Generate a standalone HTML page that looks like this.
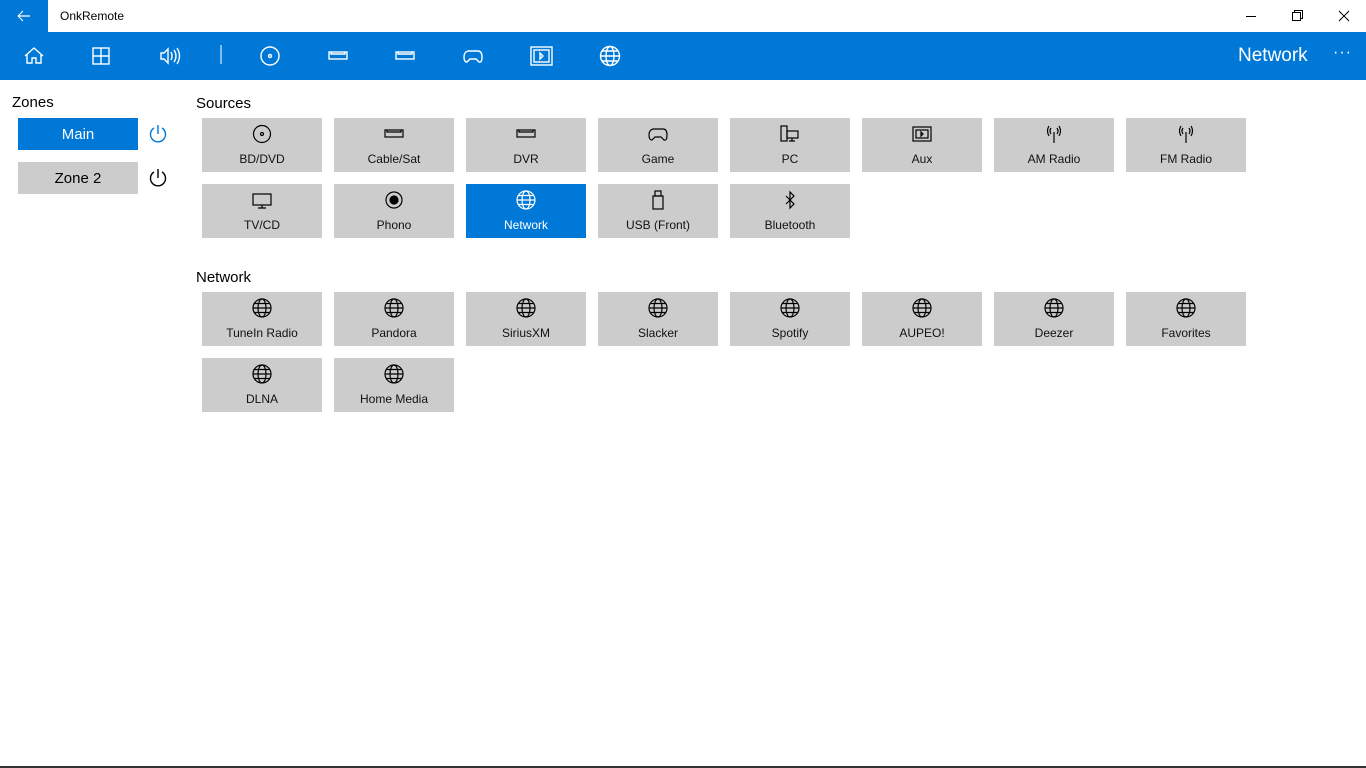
<!DOCTYPE html><html><head><meta charset="utf-8"><style>
*{margin:0;padding:0;box-sizing:border-box}
body{width:1366px;height:768px;background:#fff;font-family:"Liberation Sans",sans-serif;position:relative;overflow:hidden;color:#000}
.abs{position:absolute}
.tb{left:0;top:0;width:1366px;height:32px;background:#fff}
.back{left:0;top:0;width:48px;height:32px;background:#0078d7}
.bar{left:0;top:32px;width:1366px;height:48px;background:#0078d7}
.tile{position:absolute;width:120px;height:54px;background:#cccccc;text-align:center;font-size:12px;color:#111}
.tile svg{position:absolute;left:50%;top:6px;margin-left:-10px}
.tile span{position:absolute;left:0;right:0;top:34px}
.tile.sel{background:#0078d7;color:#fff}
.h{font-size:15px;color:#000}
.zb{position:absolute;left:18px;width:120px;height:32px;font-size:15px;text-align:center;line-height:34px}
</style></head><body>
<div class="abs tb"></div>
<div class="abs back"><svg width="48" height="32"><path d="M18 16h12M18 16l5-5M18 16l5 5" stroke="#fff" stroke-width="1.2" fill="none"/></svg></div>
<div class="abs" style="left:60px;top:9px;font-size:12px">OnkRemote</div>
<svg class="abs" style="left:1230px;top:0" width="136" height="32" fill="none" stroke="#000" stroke-width="1">
<path d="M16 16.5h10"/><rect x="62.5" y="12.5" width="8" height="8"/><path d="M64.5 12.5v-2h8v8h-2"/><path d="M109 11l10 10M119 11l-10 10"/></svg>
<div class="abs bar"></div>
<svg class="abs" style="left:0;top:32px" width="640" height="48" fill="none" stroke="#fff" stroke-width="1.4">
<path d="M25 24l9-8 9 8M27 22v9h5v-5h4v5h5v-9"/>
<rect x="93" y="16" width="16" height="16"/><path d="M101 16v16M93 24h16"/>
<path d="M161 21h3l4-4v14l-4-4h-3z M171 20q2 4 0 8 M174 18q4 6 0 12 M177 16q5 8 0 16"/>
<path d="M221 13v19" stroke-width="1"/>
<circle cx="270" cy="24" r="9"/><circle cx="270" cy="24" r="1.5"/>
<rect x="329" y="20" width="18" height="7"/><path d="M331 20v2h14v-2"/>
<rect x="396" y="20" width="18" height="7"/><path d="M398 20v2h14v-2"/>
<path d="M468 19h10q4 0 4 6t-3 5l-3-3h-6l-3 3q-3 0-3-5t4-6z"/>
<rect x="531" y="15" width="21" height="18"/><rect x="534" y="18" width="15" height="12"/><path d="M540 21l3 3-3 3z"/>
<circle cx="610" cy="24" r="9.5"/><ellipse cx="610" cy="24" rx="4" ry="9.5"/><path d="M600.5 24h19M602 19h16M602 29h16"/>
</svg>
<div class="abs" style="left:1238px;top:45px;font-size:19px;color:#fff">Network</div>
<div class="abs" style="left:1333px;top:44px;font-size:16px;color:#fff;letter-spacing:1px">···</div>

<div class="abs h" style="left:12px;top:94px">Zones</div>
<div class="zb" style="top:118px;background:#0078d7;color:#fff">Main</div>
<div class="zb" style="top:162px;background:#ccc">Zone 2</div>
<svg class="abs" style="left:147px;top:123px" width="22" height="66" fill="none" stroke-width="1.4">
<g stroke="#0078d7"><path d="M11 2v9"/><path d="M7 5a7.5 7.5 0 1 0 8 0"/></g>
<g stroke="#000" transform="translate(0,44)"><path d="M11 2v9"/><path d="M7 5a7.5 7.5 0 1 0 8 0"/></g></svg>

<div class="abs h" style="left:196px;top:95px">Sources</div>
<div class="abs h" style="left:196px;top:269px">Network</div>

<div class="tile" style="left:202px;top:118px"><svg width="20" height="20" fill="none" stroke="#000" stroke-width="1.2"><circle cx="10" cy="10" r="8.5"/><circle cx="10" cy="10" r="1.5"/></svg><span>BD/DVD</span></div>
<div class="tile" style="left:334px;top:118px"><svg width="20" height="20" fill="none" stroke="#000" stroke-width="1.2"><rect x="1" y="6" width="18" height="7"/><path d="M3 6v2h14v-2"/></svg><span>Cable/Sat</span></div>
<div class="tile" style="left:466px;top:118px"><svg width="20" height="20" fill="none" stroke="#000" stroke-width="1.2"><rect x="1" y="6" width="18" height="7"/><path d="M3 6v2h14v-2"/></svg><span>DVR</span></div>
<div class="tile" style="left:598px;top:118px"><svg width="20" height="20" fill="none" stroke="#000" stroke-width="1.2"><path d="M5 5h10q4 0 4 6t-3 5l-3-3h-6l-3 3q-3 0-3-5t4-6z"/></svg><span>Game</span></div>
<div class="tile" style="left:730px;top:118px"><svg width="20" height="20" fill="none" stroke="#000" stroke-width="1.2"><rect x="1" y="2" width="6" height="15"/><rect x="7" y="7" width="11" height="7"/><path d="M12 14v3M9 17h6"/></svg><span>PC</span></div>
<div class="tile" style="left:862px;top:118px"><svg width="20" height="20" fill="none" stroke="#000" stroke-width="1.2"><rect x="1" y="3" width="18" height="14"/><rect x="4" y="6" width="12" height="8"/><path d="M9 8l2 2-2 2z"/></svg><span>Aux</span></div>
<div class="tile" style="left:994px;top:118px"><svg width="20" height="20" fill="none" stroke="#000" stroke-width="1.2"><path d="M10 8v11M7 4q-2 3 0 6M13 4q2 3 0 6M5 2q-3 5 0 10M15 2q3 5 0 10"/></svg><span>AM Radio</span></div>
<div class="tile" style="left:1126px;top:118px"><svg width="20" height="20" fill="none" stroke="#000" stroke-width="1.2"><path d="M10 8v11M7 4q-2 3 0 6M13 4q2 3 0 6M5 2q-3 5 0 10M15 2q3 5 0 10"/></svg><span>FM Radio</span></div>

<div class="tile" style="left:202px;top:184px"><svg width="20" height="20" fill="none" stroke="#000" stroke-width="1.2"><rect x="1" y="4" width="18" height="11"/><path d="M10 15v3M6 18h8"/></svg><span>TV/CD</span></div>
<div class="tile" style="left:334px;top:184px"><svg width="20" height="20" fill="none" stroke="#000" stroke-width="1.2"><circle cx="10" cy="10" r="8"/><circle cx="10" cy="10" r="4" fill="#000"/></svg><span>Phono</span></div>
<div class="tile sel" style="left:466px;top:184px"><svg width="20" height="20" fill="none" stroke="#fff" stroke-width="1.2"><circle cx="10" cy="10" r="9"/><ellipse cx="10" cy="10" rx="4" ry="9"/><path d="M1 10h18M2.5 5.5h15M2.5 14.5h15"/></svg><span>Network</span></div>
<div class="tile" style="left:598px;top:184px"><svg width="20" height="20" fill="none" stroke="#000" stroke-width="1.2"><rect x="7" y="1" width="6" height="5"/><rect x="5" y="6" width="10" height="13"/></svg><span>USB (Front)</span></div>
<div class="tile" style="left:730px;top:184px"><svg width="20" height="20" fill="none" stroke="#000" stroke-width="1.2"><path d="M6 6l8 8-4 4V2l4 4-8 8"/></svg><span>Bluetooth</span></div>

<div id="net"></div>
<script>
var n=["TuneIn Radio","Pandora","SiriusXM","Slacker","Spotify","AUPEO!","Deezer","Favorites","DLNA","Home Media"],h="";
n.forEach(function(t,i){var x=202+(i%8)*132,y=292+Math.floor(i/8)*66;
h+='<div class="tile" style="left:'+x+'px;top:'+y+'px"><svg width="20" height="20" fill="none" stroke="#000" stroke-width="1.2"><circle cx="10" cy="10" r="9"/><ellipse cx="10" cy="10" rx="4" ry="9"/><path d="M1 10h18M2.5 5.5h15M2.5 14.5h15"/></svg><span>'+t+'</span></div>';});
document.getElementById("net").innerHTML=h;
</script>
<div class="abs" style="left:0;top:766px;width:1366px;height:2px;background:#333"></div>
</body></html>
